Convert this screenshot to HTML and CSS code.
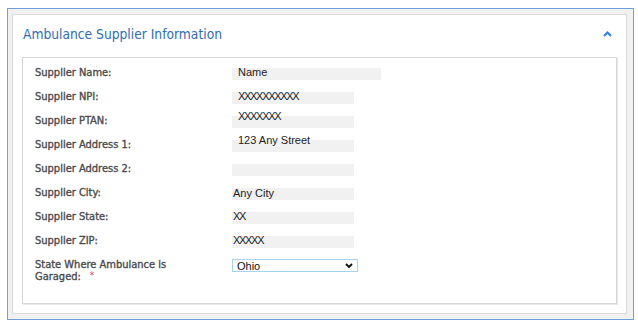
FILE: index.html
```html
<!DOCTYPE html>
<html lang="en">
<head>
    <meta charset="UTF-8">
    <title>Ambulance Supplier Information</title>
    <link rel="stylesheet" href="styles.css">
</head>
<body>
    <div class="panel">
        <div class="panel-body">
            <div class="panel-head">
                <h2 class="panel-title">Ambulance Supplier Information</h2>
                <svg class="collapse" width="9" height="6" viewBox="0 0 9 6">
                    <polyline points="1,5 4.5,1.5 8,5" fill="none" stroke="#2f7fe8" stroke-width="2"/>
                </svg>
            </div>

            <div class="form-box">
                <div class="label">Supplier Name:</div>
                <div class="field field--wide"><span>Name</span></div>

                <div class="label">Supplier NPI:</div>
                <div class="field mask"><span>XXXXXXXXXX</span></div>

                <div class="label">Supplier PTAN:</div>
                <div class="field field--raised mask"><span>XXXXXXX</span></div>

                <div class="label">Supplier Address 1:</div>
                <div class="field field--raised"><span>123 Any Street</span></div>

                <div class="label">Supplier Address 2:</div>
                <div class="field"><span></span></div>

                <div class="label">Supplier City:</div>
                <div class="field field--flush field--low"><span>Any City</span></div>

                <div class="label">Supplier State:</div>
                <div class="field field--flush mask"><span>XX</span></div>

                <div class="label">Supplier ZIP:</div>
                <div class="field field--flush mask"><span>XXXXX</span></div>

                <div class="label">
                    <div>State Where Ambulance is</div>
                    <div class="label-line">
                        <span>Garaged:</span>
                        <span class="required">*</span>
                    </div>
                </div>
                <div class="select">
                    <span>Ohio</span>
                    <svg width="8" height="5" viewBox="0 0 8 5">
                        <polyline points="1,1 4,4 7,1" fill="none" stroke="#111" stroke-width="1.9"/>
                    </svg>
                </div>
            </div>
        </div>
    </div>
</body>
</html>
```

FILE: styles.css
```css
body {
    margin: 0;
    background: #fff;
    font-family: "DejaVu Sans Condensed", "DejaVu Sans", sans-serif;
    font-stretch: condensed;
}
.panel {
    margin: 8px 0 0 7px;
    width: 627px;
    height: 312px;
    box-sizing: border-box;
    border: 1px solid #6d9fdf;
    background: #f1f1f1;
    padding: 5px 6px 5px 4px;
}
.panel-body {
    height: 100%;
    box-sizing: border-box;
    border: 1px solid #dadada;
    background: #fff;
    display: flex;
    flex-direction: column;
    padding: 0 9px 9px;
}
.panel-head {
    height: 42px;
    flex-shrink: 0;
    display: flex;
    align-items: center;
    justify-content: space-between;
    padding: 0 5px 4px 1px;
    box-sizing: border-box;
}
.panel-title {
    margin: 0;
    font-size: 13.7px;
    font-weight: normal;
    color: #2f6db5;
}
.form-box {
    flex: 1;
    border: 1px solid #d6d6d6;
    box-shadow: 1px 1px 0 #e8e8e8;
    padding: 10px 12px;
    display: grid;
    grid-template-columns: 197px 1fr;
    grid-auto-rows: 24px;
    align-content: start;
}
.label {
    font-size: 11px;
    line-height: 12px;
    color: #4a4a4a;
    -webkit-text-stroke: 0.35px #4a4a4a;
    margin-top: -1px;
    width: 136px;
}
.label-line {
    display: flex;
    align-items: center;
    gap: 9px;
}
.required {
    color: #d9534f;
    -webkit-text-stroke: 0;
    font-size: 10px;
    line-height: 10px;
    margin-top: -2px;
}
.field {
    width: 122px;
    height: 12px;
    background: #f1f1f1;
    font-family: "Liberation Sans", Arial, sans-serif;
    font-size: 11px;
    line-height: 12px;
    color: #222;
}
.field span {
    display: block;
    margin-top: -2px;
    padding-left: 6px;
}
.field--wide {
    width: 149px;
}
.field--raised span {
    margin-top: -6px;
}
.field--flush span {
    padding-left: 1px;
}
.field--low span {
    margin-top: -1px;
}
.mask span {
    letter-spacing: -1.3px;
}
.select {
    width: 126px;
    height: 13px;
    margin-top: -1px;
    box-sizing: border-box;
    border: 1px solid #a6d4ee;
    display: flex;
    align-items: center;
    justify-content: space-between;
    padding: 0 4px;
    font-family: "Liberation Sans", Arial, sans-serif;
    font-size: 11px;
    color: #111;
}
```
